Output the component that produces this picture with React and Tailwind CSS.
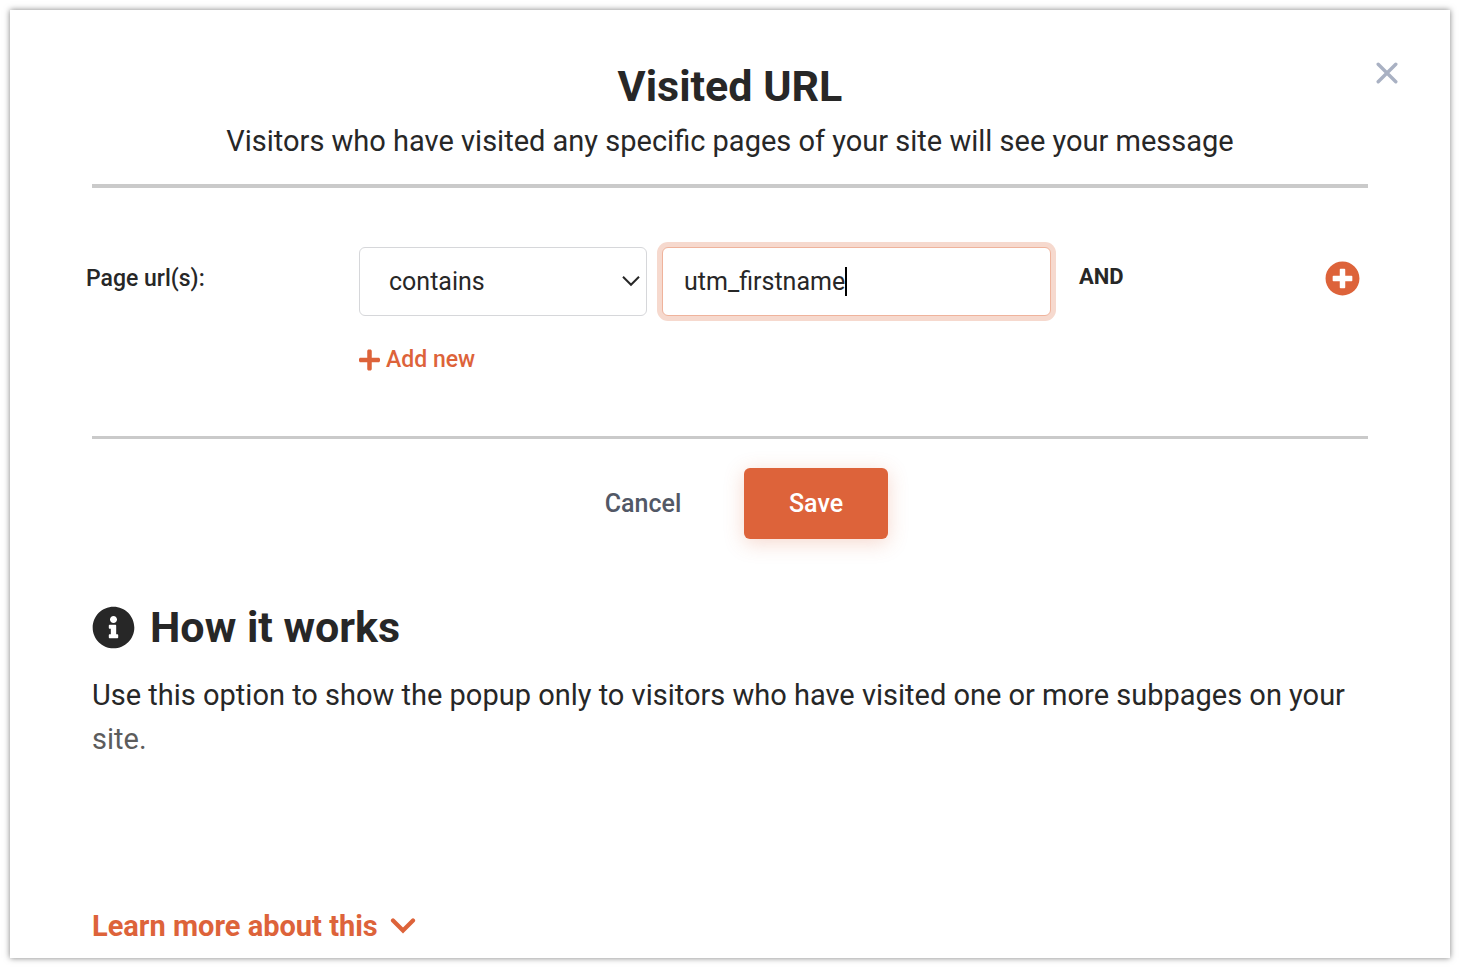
import { useState } from 'react';
import { FaInfoCircle, FaPlus, FaPlusCircle } from 'react-icons/fa';

const matchTypes = ['contains', 'does not contain', 'is exactly', 'starts with', 'ends with'];

function CloseIcon() {
  return (
    <svg viewBox="0 0 22 22" className="h-[22px] w-[22px]" fill="none" stroke="currentColor" strokeWidth="3.4" strokeLinecap="round">
      <path d="M2.2 2.2l17.6 17.6M19.8 2.2L2.2 19.8" />
    </svg>
  );
}

function UrlRule() {
  const [match, setMatch] = useState('contains');
  const [url, setUrl] = useState('utm_firstname');

  return (
    <div className="-mx-[6px] flex items-start pt-[59px] pb-[60px]">
      <label htmlFor="page-url" className="w-[273px] shrink-0 pt-4 text-[23px] leading-8 font-medium">
        Page url(s):
      </label>
      <div className="min-w-0 flex-1">
        <div className="flex items-start">
          <div className="relative w-[288px] shrink-0">
            <select
              aria-label="Match type"
              value={match}
              onChange={(e) => setMatch(e.target.value)}
              className="h-[69px] w-full appearance-none rounded-md border border-[#d6d7da] bg-white px-[29px] text-[25px] outline-none"
            >
              {matchTypes.map((type) => (
                <option key={type}>{type}</option>
              ))}
            </select>
            <svg
              viewBox="0 0 18 12"
              className="pointer-events-none absolute top-7 right-[7px] h-3 w-[18px]"
              fill="none"
              stroke="currentColor"
              strokeWidth="2"
            >
              <path d="M1 1.8l8 8 8-8" />
            </svg>
          </div>
          <div className="relative ml-[15px] w-[389px] min-w-0">
            <input
              id="page-url"
              type="text"
              autoFocus
              value={url}
              onChange={(e) => setUrl(e.target.value)}
              className="h-[69px] w-full rounded-md border border-[#efb39c] bg-white px-[21px] text-[25px] caret-transparent ring-[5px] ring-[#f6d9ce] outline-none"
            />
            {/* text cursor */}
            <span className="pointer-events-none absolute top-5 left-[183px] h-[29px] w-[2px] bg-black" />
          </div>
          <span className="ml-7 pt-[14px] text-[22px] leading-8 font-bold">AND</span>
          <button type="button" aria-label="Add condition" className="mt-[14px] mr-[14px] ml-auto text-[#dd633a]">
            <FaPlusCircle className="h-[35px] w-[35px]" />
          </button>
        </div>
        <button type="button" className="mt-7 flex items-center gap-[6px] text-[23px] leading-8 font-medium text-[#dd633a]">
          <FaPlus className="h-6 w-[21px]" />
          Add new
        </button>
      </div>
    </div>
  );
}

export default function App() {
  return (
    <div className="bg-white p-[10px] font-[Roboto,sans-serif] text-[#272727]">
      <div role="dialog" aria-labelledby="dialog-title" className="relative bg-white px-[82px] pt-[50px] pb-[10px] shadow-[0_0_6px_rgba(0,0,0,0.5)]">
        <button type="button" aria-label="Close" className="absolute top-[52px] right-[52px] text-[#a9b1c3]">
          <CloseIcon />
        </button>

        <header className="border-b-4 border-[#cacaca] pb-[21px] text-center">
          <h1 id="dialog-title" className="text-[43px] leading-[52px] font-bold">Visited URL</h1>
          <p className="mt-[7px] text-[29px] leading-[44px]">
            Visitors who have visited any specific pages of your site will see your message
          </p>
        </header>

        <UrlRule />

        <div className="flex justify-center border-t-[3px] border-[#cacaca] pt-[29px]">
          <button type="button" className="h-[71px] w-[142px] text-[25px] font-medium text-[#525866]">
            Cancel
          </button>
          <button
            type="button"
            className="ml-[30px] h-[71px] w-36 rounded-md bg-[#dd633a] text-[25px] font-medium text-white shadow-[0_4px_20px_rgba(221,99,58,0.25)]"
          >
            Save
          </button>
        </div>

        <section className="mt-[62px]">
          <h2 className="flex items-center gap-[15px] text-[43px] leading-[52px] font-bold">
            <FaInfoCircle className="h-[43px] w-[43px]" />
            How it works
          </h2>
          <p className="mt-5 text-[29px] leading-[44px]">
            Use this option to show the popup only to visitors who have visited one or more subpages on your{' '}
            <span className="text-[#5c5c5c]">site.</span>
          </p>
        </section>

        <button type="button" className="mt-[143px] flex items-center gap-3 text-[29px] leading-[44px] font-bold text-[#dd633a]">
          Learn more about this
          <svg viewBox="0 0 26 16" className="h-4 w-[26px]" fill="none" stroke="currentColor" strokeWidth="4.2" strokeLinecap="round">
            <path d="M3 2.5l10 10 10-10" />
          </svg>
        </button>
      </div>
    </div>
  );
}
